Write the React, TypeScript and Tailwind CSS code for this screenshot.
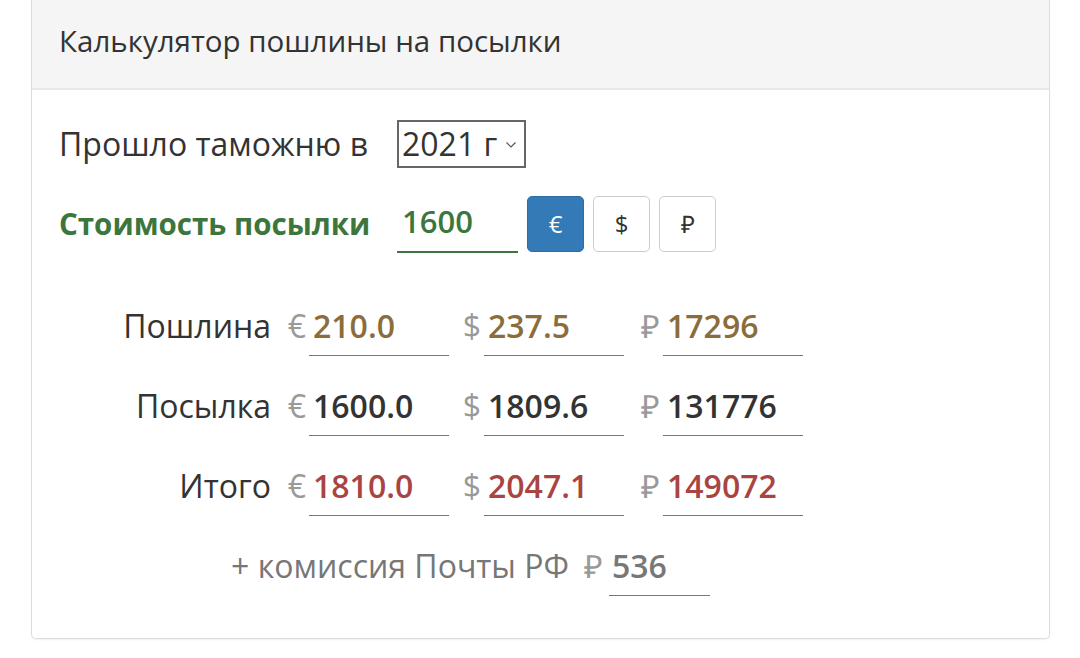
import { useState } from "react";

type Row = {
  label: string;
  values: [string, string, string];
  color: string;
};

const rows: Row[] = [
  { label: "Пошлина", values: ["210.0", "237.5", "17296"], color: "text-[#8a6d3b]" },
  { label: "Посылка", values: ["1600.0", "1809.6", "131776"], color: "text-[#333333]" },
  { label: "Итого", values: ["1810.0", "2047.1", "149072"], color: "text-[#a94442]" },
];

const symbols = ["€", "$", "₽"];
const symbolWidths = ["w-[38px]", "w-[35px]", "w-[39px]"];

function Chevron() {
  return (
    <svg width="12" height="8" viewBox="0 0 12 8" className="ml-[8px] mt-[2px]">
      <path d="M1.5 1.5 L6 6 L10.5 1.5" fill="none" stroke="#555" strokeWidth="1.2" />
    </svg>
  );
}

function ValueBox({ symbol, value, color, width }: { symbol: string; value: string; color: string; width: string }) {
  return (
    <div className="flex items-center">
      <span className={`${width} pr-[3px] text-right text-[32px] text-[#999999]`}>{symbol}</span>
      <div className={`flex h-[60px] w-[140px] items-center border-b border-[#777777] pl-[4px] text-[32px] font-semibold ${color}`}>
        {value}
      </div>
    </div>
  );
}

export default function App() {
  const [currency, setCurrency] = useState(0);

  return (
    <div className="h-[658px] w-[1080px] bg-white pl-[31px] font-['Open_Sans',sans-serif] text-[#333333]">
      <div className="w-[1019px] overflow-hidden rounded-b-[5px] border-x border-b border-[#dddddd] shadow-[0_1px_2px_rgba(0,0,0,0.06)]">
        <div className="flex h-[90px] items-center border-b-2 border-[#e7e7e7] bg-[#f5f5f5] pb-[6px] pl-[27px] text-[29.5px] text-[#333333]">
          Калькулятор пошлины на посылки
        </div>

        <div className="pb-[42px] pl-[27px] pt-[30px]">
          <div className="flex h-[48px] items-center">
            <span className="w-[338px] text-[32px]">Прошло таможню в</span>
            <div className="flex h-[48px] items-center border-2 border-[#666666] pl-[3px] pr-[7px] text-[32px]">
              2021 г
              <Chevron />
            </div>
          </div>

          <div className="mt-[28px] flex h-[56px] items-center">
            <span className="w-[338px] text-[29.5px] font-bold text-[#3c763d]">Стоимость посылки</span>
            <div className="flex h-[58px] w-[121px] items-center border-b-2 border-[#3c763d] pb-[4px] pl-[5px] text-[31px] font-semibold text-[#3c763d]">
              1600
            </div>
            <div className="ml-[9px] flex gap-[9px]">
              {symbols.map((s, i) => (
                <button
                  key={s}
                  onClick={() => setCurrency(i)}
                  className={`flex h-[56px] w-[57px] items-center justify-center rounded-[5px] border text-[24px] ${
                    currency === i
                      ? "border-[#2e6da4] bg-[#337ab7] text-white"
                      : "border-[#cccccc] bg-white text-[#333333]"
                  }`}
                >
                  {s}
                </button>
              ))}
            </div>
          </div>

          <div className="mt-[44px] flex flex-col gap-[20px]">
            {rows.map((row) => (
              <div key={row.label} className="flex items-center">
                <span className="w-[212px] text-right text-[32px]">{row.label}</span>
                {row.values.map((v, i) => (
                  <ValueBox key={i} symbol={symbols[i]} value={v} color={row.color} width={symbolWidths[i]} />
                ))}
              </div>
            ))}
            <div className="flex items-center">
              <span className="w-[510px] text-right text-[32px] text-[#777777]">+ комиссия Почты РФ</span>
              <span className="w-[40px] pr-[6px] text-right text-[32px] text-[#999999]">₽</span>
              <div className="flex h-[60px] w-[101px] items-center border-b border-[#777777] pl-[3px] text-[32px] font-semibold text-[#777777]">
                536
              </div>
            </div>
          </div>
        </div>
      </div>
    </div>
  );
}
